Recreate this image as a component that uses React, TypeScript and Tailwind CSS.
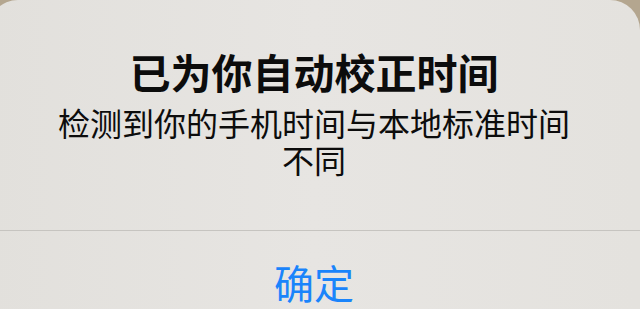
export default function App() {
  return (
    <div className="w-[640px] h-[309px] overflow-hidden bg-[#b4a68f]">
      <div
        className="ml-[-12px] w-[652px] h-[309px] rounded-t-[30px] bg-gradient-to-r from-[#e2e0dc] via-[#e7e5e2] to-[#e4e2de] flex flex-col"
        style={{ fontFamily: '"Noto Sans CJK SC", "Noto Sans", sans-serif' }}
      >
        {/* 标题与说明 */}
        <div className="pt-[47px] pb-[52px] flex flex-col items-center text-[#0c0c0c]">
          <h2 className="text-[41px] leading-[48px] font-bold">已为你自动校正时间</h2>
          <p className="mt-[9px] w-[520px] text-center text-[32px] leading-[37px]">
            检测到你的手机时间与本地标准时间不同
          </p>
        </div>

        {/* 按钮 */}
        <div className="border-t-[1.5px] border-[#c6c4c0] flex-1 flex items-start justify-center pt-[31px]">
          <span className="text-[40px] leading-[40px] text-[#1a84fb]">确定</span>
        </div>
      </div>
    </div>
  );
}
